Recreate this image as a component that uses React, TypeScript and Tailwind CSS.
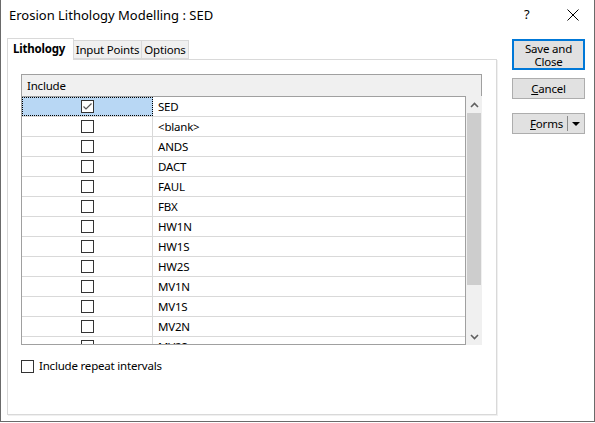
import React from "react";

const rows = ["SED", "<blank>", "ANDS", "DACT", "FAUL", "FBX", "HW1N", "HW1S", "HW2S", "MV1N", "MV1S", "MV2N", "MV2S"];

function Box({ checked }: { checked?: boolean }) {
  return (
    <div className="w-[13px] h-[13px] border border-[#333333] bg-white flex items-center justify-center shrink-0">
      {checked && (
        <svg width="11" height="11" viewBox="0 0 11 11">
          <path d="M1.5 5.5 L4 8 L9.5 2.5" fill="none" stroke="#555555" strokeWidth="1.2" />
        </svg>
      )}
    </div>
  );
}

export default function App() {
  return (
    <div className="w-[595px] h-[423px] bg-white overflow-hidden" style={{ fontFamily: '"Noto Sans", "Open Sans", sans-serif' }}>
      <div className="w-[595px] h-[422px] border-l border-r border-b border-[#6a6a6a] flex flex-col text-[11.5px] tracking-[-0.2px] text-black whitespace-nowrap">
        {/* Title bar */}
        <div className="h-[31px] flex items-center pl-[8px] relative shrink-0">
          <span className="text-[13px] tracking-normal leading-none">Erosion Lithology Modelling : SED</span>
          <span className="absolute left-[523px] top-[8px] text-[13px] leading-none">?</span>
          <svg className="absolute left-[566px] top-[9px]" width="12" height="12" viewBox="0 0 12 12">
            <path d="M0.5 0.5 L11.5 11.5 M11.5 0.5 L0.5 11.5" stroke="#000" strokeWidth="1" />
          </svg>
        </div>
        <div className="flex flex-1">
          {/* Left: tabs */}
          <div className="pl-[6px] pt-[6px] flex flex-col">
            <div className="flex items-end h-[22px] relative z-10">
              <div className="h-[22px] w-[67px] border border-b-0 border-[#d9d9d9] bg-white flex items-center pl-[5px] font-bold -mb-px pb-[2px]">
                Lithology
              </div>
              <div className="h-[19px] w-[68px] border border-l-0 border-[#d9d9d9] bg-[#f0f0f0] flex items-center justify-center">
                Input Points
              </div>
              <div className="h-[19px] w-[47px] border border-l-0 border-[#d9d9d9] bg-[#f0f0f0] flex items-center justify-center">
                Options
              </div>
            </div>
            <div className="w-[490px] h-[356px] border border-[#d9d9d9] bg-white pl-[13px] pt-[14px] flex flex-col shadow-[1px_1px_0_#f0f0f0]">
              {/* Grid */}
              <div className="w-[461px] flex flex-col">
                <div className="h-[22px] bg-[#f0f0f0] border border-b-0 border-[#a0a0a0] flex items-center pl-[5px]">
                  Include
                </div>
                <div className="flex">
                  <div className="w-[445px] h-[249px] border border-[#a0a0a0] bg-white overflow-hidden">
                    {rows.map((r, i) => (
                      <div key={r} className="h-[20px] flex border-b border-[#d9d9d9]">
                        <div
                          className={
                            i === 0
                              ? "w-[131px] bg-[#b8d7f4] border border-dotted border-black flex items-center justify-center"
                              : "w-[131px] border-r border-[#d9d9d9] flex items-center justify-center"
                          }
                        >
                          <Box checked={i === 0} />
                        </div>
                        <div className="flex-1 flex items-center pl-[5px]">{r}</div>
                      </div>
                    ))}
                  </div>
                  <div className="w-[16px] h-[249px] bg-[#f0f0f0] flex flex-col">
                    <div className="h-[17px] flex items-center justify-center">
                      <svg width="9" height="6" viewBox="0 0 9 6">
                        <path d="M1 5 L4.5 1.5 L8 5" fill="none" stroke="#606060" strokeWidth="1.6" />
                      </svg>
                    </div>
                    <div className="h-[172px] bg-[#cdcdcd] mx-[1px]" />
                    <div className="flex-1" />
                    <div className="h-[17px] flex items-center justify-center">
                      <svg width="9" height="6" viewBox="0 0 9 6">
                        <path d="M1 1 L4.5 4.5 L8 1" fill="none" stroke="#606060" strokeWidth="1.6" />
                      </svg>
                    </div>
                  </div>
                </div>
              </div>
              <div className="flex items-center mt-[14px] h-[14px]">
                <Box />
                <span className="ml-[5px]">Include repeat intervals</span>
              </div>
            </div>
          </div>
          {/* Right: buttons */}
          <div className="ml-[15px] pt-[8px] flex flex-col">
            <div className="w-[73px] h-[31px] border-2 border-[#0078d7] bg-[#e1e1e1] flex flex-col items-center justify-center leading-[13px]">
              <span>Save and</span>
              <span>Close</span>
            </div>
            <div className="w-[73px] h-[21px] mt-[8px] border border-[#adadad] bg-[#e1e1e1] flex items-center justify-center">
              <span><span className="underline">C</span>ancel</span>
            </div>
            <div className="w-[73px] h-[21px] mt-[14px] border border-[#adadad] bg-[#e1e1e1] flex items-center">
              <div className="flex-1 flex items-center justify-end pr-[4px]">
                <span><span className="underline">F</span>orms</span>
              </div>
              <div className="w-px h-[15px] bg-[#8a8a8a]" />
              <div className="w-[16px] flex items-center justify-center">
                <svg width="8" height="4" viewBox="0 0 8 4">
                  <path d="M0 0 L8 0 L4 4 Z" fill="#000" />
                </svg>
              </div>
            </div>
          </div>
        </div>
      </div>
    </div>
  );
}
